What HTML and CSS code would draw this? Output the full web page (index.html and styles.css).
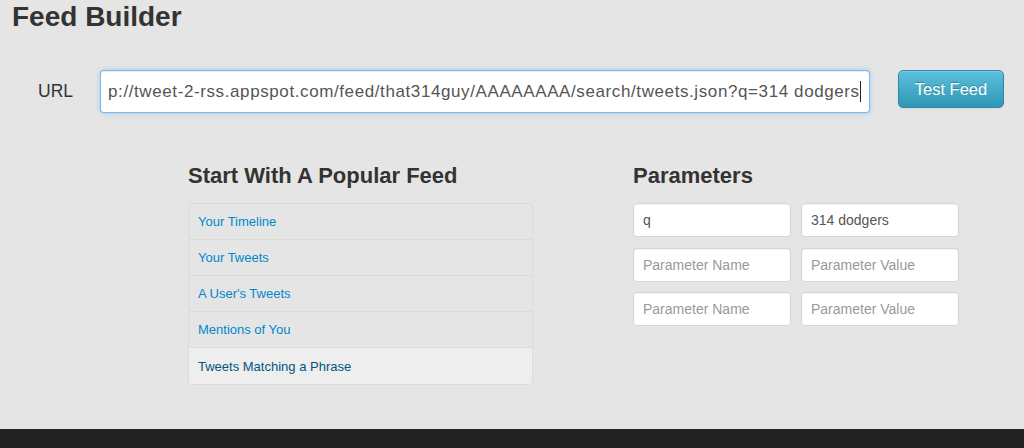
FILE: index.html
```html
<!DOCTYPE html>
<html lang="en">
<head>
<meta charset="utf-8">
<title>Feed Builder</title>
<link rel="stylesheet" href="styles.css">
</head>
<body>
<div class="page">
  <main class="main">
    <h1 class="title">Feed Builder</h1>
    <div class="url-row">
      <label class="url-label">URL</label>
      <div class="url-field">
        <span class="url-text">p://tweet-2-rss.appspot.com/feed/that314guy/AAAAAAAA/search/tweets.json?q=314 dodgers</span><span class="caret"></span>
      </div>
      <button class="btn-test" type="button">Test Feed</button>
    </div>
    <div class="columns">
      <section class="col-left">
        <h3 class="section-title">Start With A Popular Feed</h3>
        <ul class="feed-list">
          <li class="feed-item"><a class="feed-link">Your Timeline</a></li>
          <li class="feed-item"><a class="feed-link">Your Tweets</a></li>
          <li class="feed-item"><a class="feed-link">A User's Tweets</a></li>
          <li class="feed-item"><a class="feed-link">Mentions of You</a></li>
          <li class="feed-item active"><a class="feed-link">Tweets Matching a Phrase</a></li>
        </ul>
      </section>
      <section class="col-right">
        <h3 class="section-title">Parameters</h3>
        <div class="param-grid">
          <div class="param">q</div>
          <div class="param">314 dodgers</div>
          <div class="param placeholder">Parameter Name</div>
          <div class="param placeholder">Parameter Value</div>
          <div class="param placeholder">Parameter Name</div>
          <div class="param placeholder">Parameter Value</div>
        </div>
      </section>
    </div>
  </main>
  <footer class="footer"></footer>
</div>
</body>
</html>
```

FILE: styles.css
```css
* { box-sizing: border-box; }

html, body {
  margin: 0;
  padding: 0;
}

body {
  background: #e5e5e5;
  font-family: "Liberation Sans", Arial, Helvetica, sans-serif;
  color: #333;
  overflow: hidden;
}

.page {
  height: 448px;
  display: flex;
  flex-direction: column;
}

.main {
  height: 429px;
  background-color: #e5e5e5;
}

.footer {
  flex: 1;
  background: #222;
}

.title {
  margin: 0 0 0 12px;
  font-size: 28px;
  line-height: 34px;
  font-weight: bold;
  color: #333;
}

.url-row {
  display: flex;
  align-items: flex-start;
  margin-top: 36px;
  padding-left: 38px;
}

.url-label {
  width: 62px;
  font-size: 17.5px;
  line-height: 43px;
  color: #333;
}

.url-field {
  width: 770px;
  height: 43px;
  background: #fff;
  border: 1px solid rgba(82, 168, 236, 0.8);
  border-radius: 4px;
  box-shadow: inset 0 1px 1px rgba(0,0,0,0.075), 0 0 5px rgba(82, 168, 236, 0.45);
  padding: 0 9px 0 7px;
  display: flex;
  align-items: center;
  white-space: nowrap;
}

.url-text {
  font-size: 17px;
  letter-spacing: 0.6px;
  color: #555;
}

.caret {
  display: inline-block;
  width: 1px;
  height: 21px;
  background: #222;
  flex-shrink: 0;
}

.btn-test {
  margin-left: 28px;
  width: 106px;
  height: 38px;
  border: 1px solid #2a8aa8;
  border-radius: 5px;
  background: linear-gradient(to bottom, #5bc0de, #2f96b4);
  color: #fff;
  font-family: inherit;
  font-size: 16.5px;
  text-shadow: 0 -1px 0 rgba(0,0,0,0.25);
  box-shadow: inset 0 1px 0 rgba(255,255,255,0.2), 0 1px 2px rgba(0,0,0,0.05);
  padding: 0;
  cursor: pointer;
}

.columns {
  display: flex;
  margin-top: 50px;
  padding-left: 188px;
}

.col-left {
  width: 345px;
}

.col-right {
  width: 326px;
  margin-left: 100px;
}

.section-title {
  margin: 0 0 14px;
  font-size: 22px;
  line-height: 26px;
  font-weight: bold;
  color: #333;
}

.feed-list {
  list-style: none;
  margin: 0;
  padding: 0;
  border: 1px solid rgba(0,0,0,0.045);
  border-radius: 4px;
  overflow: hidden;
}

.feed-item {
  height: 36px;
  border-bottom: 1px solid rgba(0,0,0,0.045);
  display: flex;
  align-items: center;
  padding-left: 9px;
}

.feed-item:last-child {
  border-bottom: none;
}

.feed-link {
  font-size: 13px;
  color: #0088cc;
  text-decoration: none;
}

.feed-item.active {
  background: #eeeeee;
}

.feed-item.active .feed-link {
  color: #005580;
}

.param-grid {
  display: grid;
  grid-template-columns: 158px 158px;
  column-gap: 10px;
  row-gap: 10.5px;
}

.param {
  height: 34px;
  background: #fff;
  border: 1px solid #d6d6d6;
  border-radius: 4px;
  box-shadow: inset 0 1px 1px rgba(0,0,0,0.05);
  padding: 0 9px;
  display: flex;
  align-items: center;
  font-size: 14px;
  color: #555;
}

.param.placeholder {
  color: #999;
}
```
